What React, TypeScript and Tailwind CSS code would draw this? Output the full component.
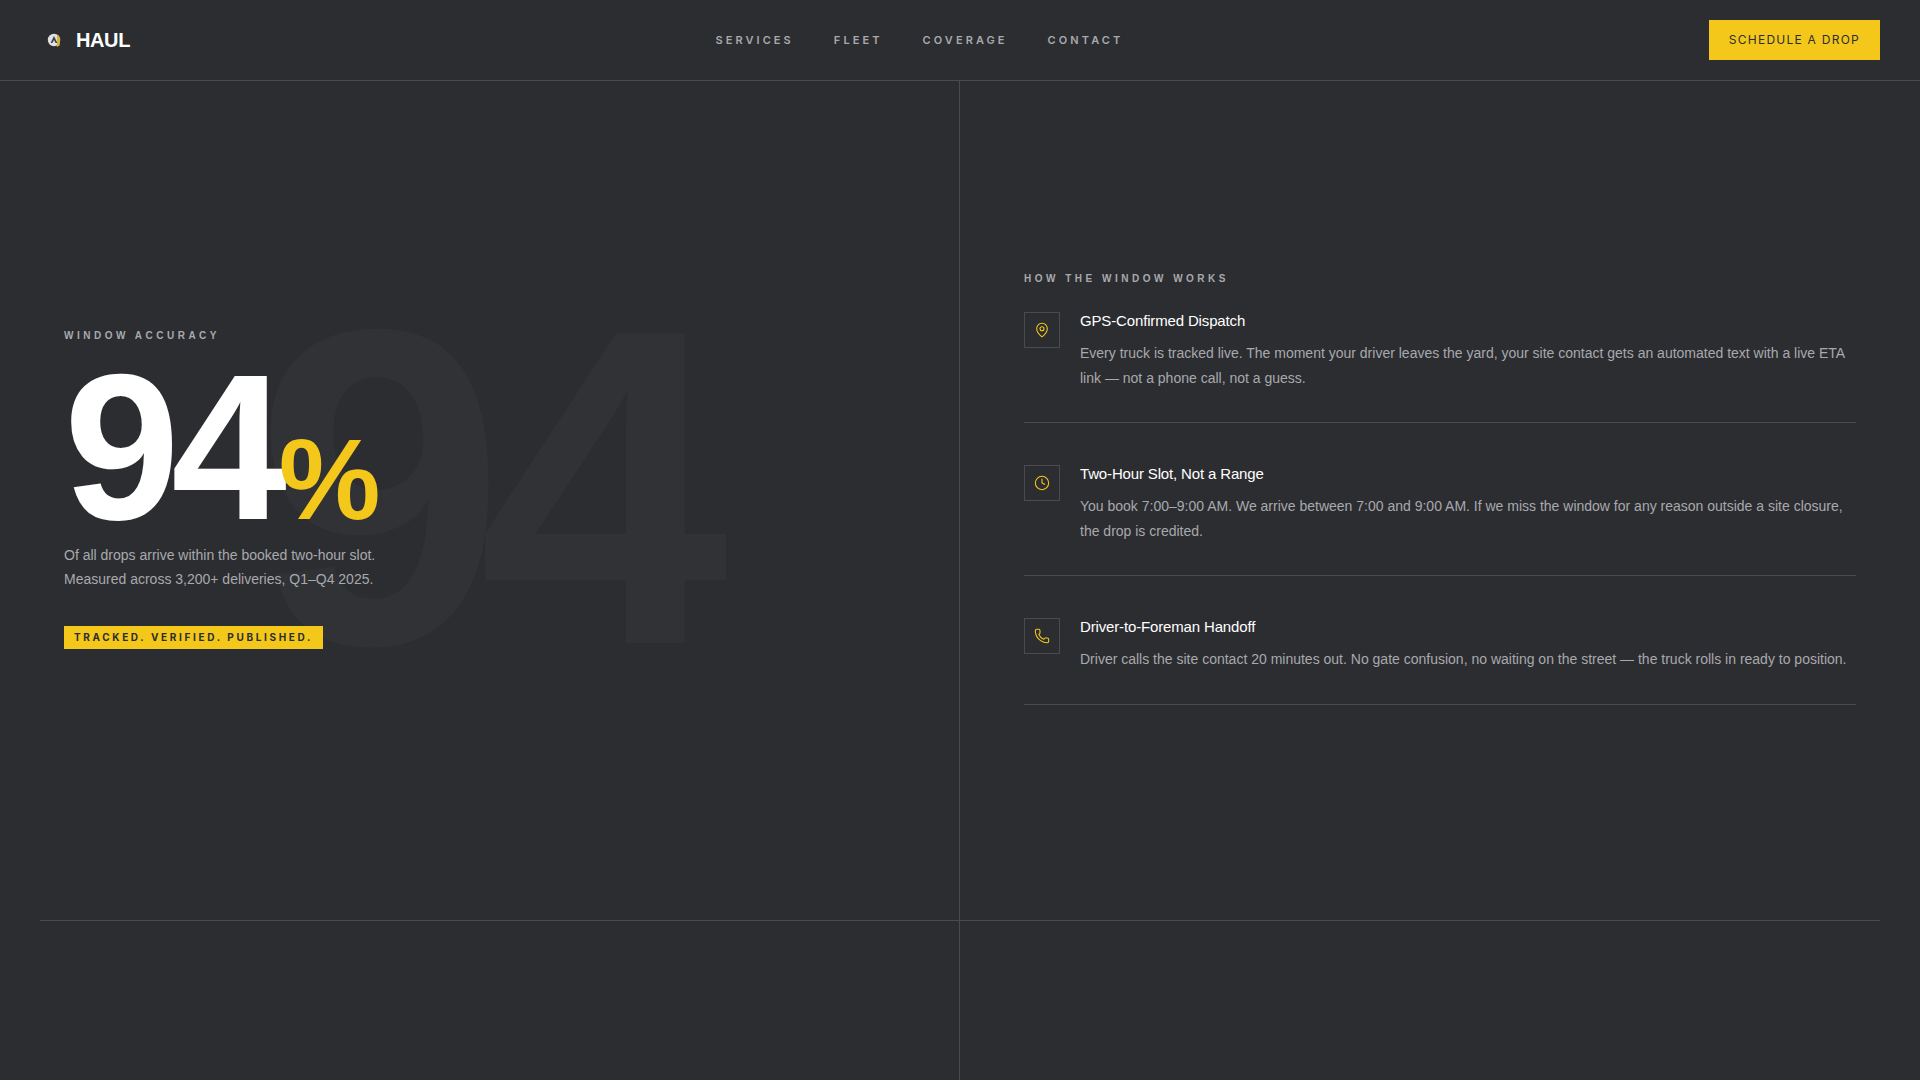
import { MapPin, Clock, Phone } from "lucide-react";

const sans = "font-['Liberation_Sans',Arial,sans-serif]";
const inter = "font-['Inter',sans-serif]";

function Logo() {
  return (
    <svg width="14" height="16" viewBox="0 0 14 16" className="shrink-0">
      <circle cx="7" cy="8" r="6.2" fill="#dfe1e4" />
      <path d="M10 2.4c2 1 3.2 3 3.2 5.600l-.6 5.500L9.800 15z" fill="#d9b23a" />
      <path d="M7 4l3.400 7H8.600L7 8 5.400 11H3.600z" fill="#3d4046" />
    </svg>
  );
}

const items = [
  {
    icon: <MapPin size={16} strokeWidth={1.6} />,
    title: "GPS-Confirmed Dispatch",
    body: "Every truck is tracked live. The moment your driver leaves the yard, your site contact gets an automated text with a live ETA link — not a phone call, not a guess.",
  },
  {
    icon: <Clock size={16} strokeWidth={1.6} />,
    title: "Two-Hour Slot, Not a Range",
    body: "You book 7:00–9:00 AM. We arrive between 7:00 and 9:00 AM. If we miss the window for any reason outside a site closure, the drop is credited.",
  },
  {
    icon: <Phone size={16} strokeWidth={1.6} />,
    title: "Driver-to-Foreman Handoff",
    body: "Driver calls the site contact 20 minutes out. No gate confusion, no waiting on the street — the truck rolls in ready to position.",
  },
];

export default function App() {
  return (
    <div className={`h-[1080px] w-full overflow-hidden bg-[#2c2d31] ${sans}`}>
      <header className="flex h-[81px] items-center justify-between border-b border-[#4a4b50] px-10">
        <div className="flex items-center gap-[15px] pl-[7px]">
          <Logo />
          <span className="text-[20px] font-bold tracking-[-0.02em] text-white">HAUL</span>
        </div>
        <nav className={`flex gap-10 ${inter} text-[11px] font-semibold tracking-[0.28em] text-[#a8a9ad]`}>
          <span>SERVICES</span>
          <span>FLEET</span>
          <span>COVERAGE</span>
          <span>CONTACT</span>
        </nav>
        <div className={`bg-[#f4c81a] px-5 py-[13px] ${inter} text-[12px] leading-[14px] tracking-[1.25px] text-[#2c2d31]`}>
          SCHEDULE A DROP
        </div>
      </header>

      <main className="grid h-[839px] grid-cols-[960px_1fr]">
        <section className="relative flex flex-col justify-center overflow-hidden border-r border-[#4a4b50] pb-[23px] pl-16">
          <div className="pointer-events-none absolute left-[255px] top-[181px] text-[450px] font-bold leading-none tracking-[-0.06em] text-[#313236]">
            94
          </div>
          <div className="relative">
            <div className="text-[10px] font-bold leading-[12px] tracking-[0.35em] text-[#a8a9ad]">WINDOW ACCURACY</div>
            <div className="mt-3 h-[187px] text-[208px] font-bold leading-[187px] tracking-[-0.04em] text-white">
              94
              <span className="text-[114.4px] leading-none tracking-[-0.04em] text-[#f4c81a]">%</span>
            </div>
            <p className="mt-[2px] text-[14px] leading-[24.5px] text-[#a8a9ad]">
              Of all drops arrive within the booked two-hour slot.
              <br />
              Measured across 3,200+ deliveries, Q1–Q4 2025.
            </p>
            <div className={`mt-[34px] inline-block bg-[#f4c81a] px-[10px] py-[5px] ${inter} text-[10px] font-bold leading-[13px] tracking-[0.265em] text-[#2c2d31]`}>
              TRACKED. VERIFIED. PUBLISHED.
            </div>
          </div>
        </section>

        <section className="flex flex-col justify-center pb-[23px] pl-16 pr-16">
          <div className="mb-[27px] text-[10px] font-bold leading-[12px] tracking-[0.35em] text-[#a8a9ad]">HOW THE WINDOW WORKS</div>
          {items.map((it) => (
            <div key={it.title} className="mb-[42px] flex gap-5 border-b border-[#4a4b50] pb-8 last:mb-0">
              <div className="flex h-9 w-9 shrink-0 items-center justify-center border border-[#4a4b50] text-[#f4c81a]">
                {it.icon}
              </div>
              <div>
                <h3 className="text-[15px] font-normal leading-[18px] tracking-[-0.01em] text-white">{it.title}</h3>
                <p className="mt-[11px] text-[14px] leading-[24.5px] text-[#a8a9ad]">{it.body}</p>
              </div>
            </div>
          ))}
        </section>
      </main>

      <div className="mx-10 grid h-[160px] grid-cols-[920px_1fr] border-t border-[#4a4b50]">
        <div className="border-r border-[#4a4b50]" />
        <div />
      </div>
    </div>
  );
}
